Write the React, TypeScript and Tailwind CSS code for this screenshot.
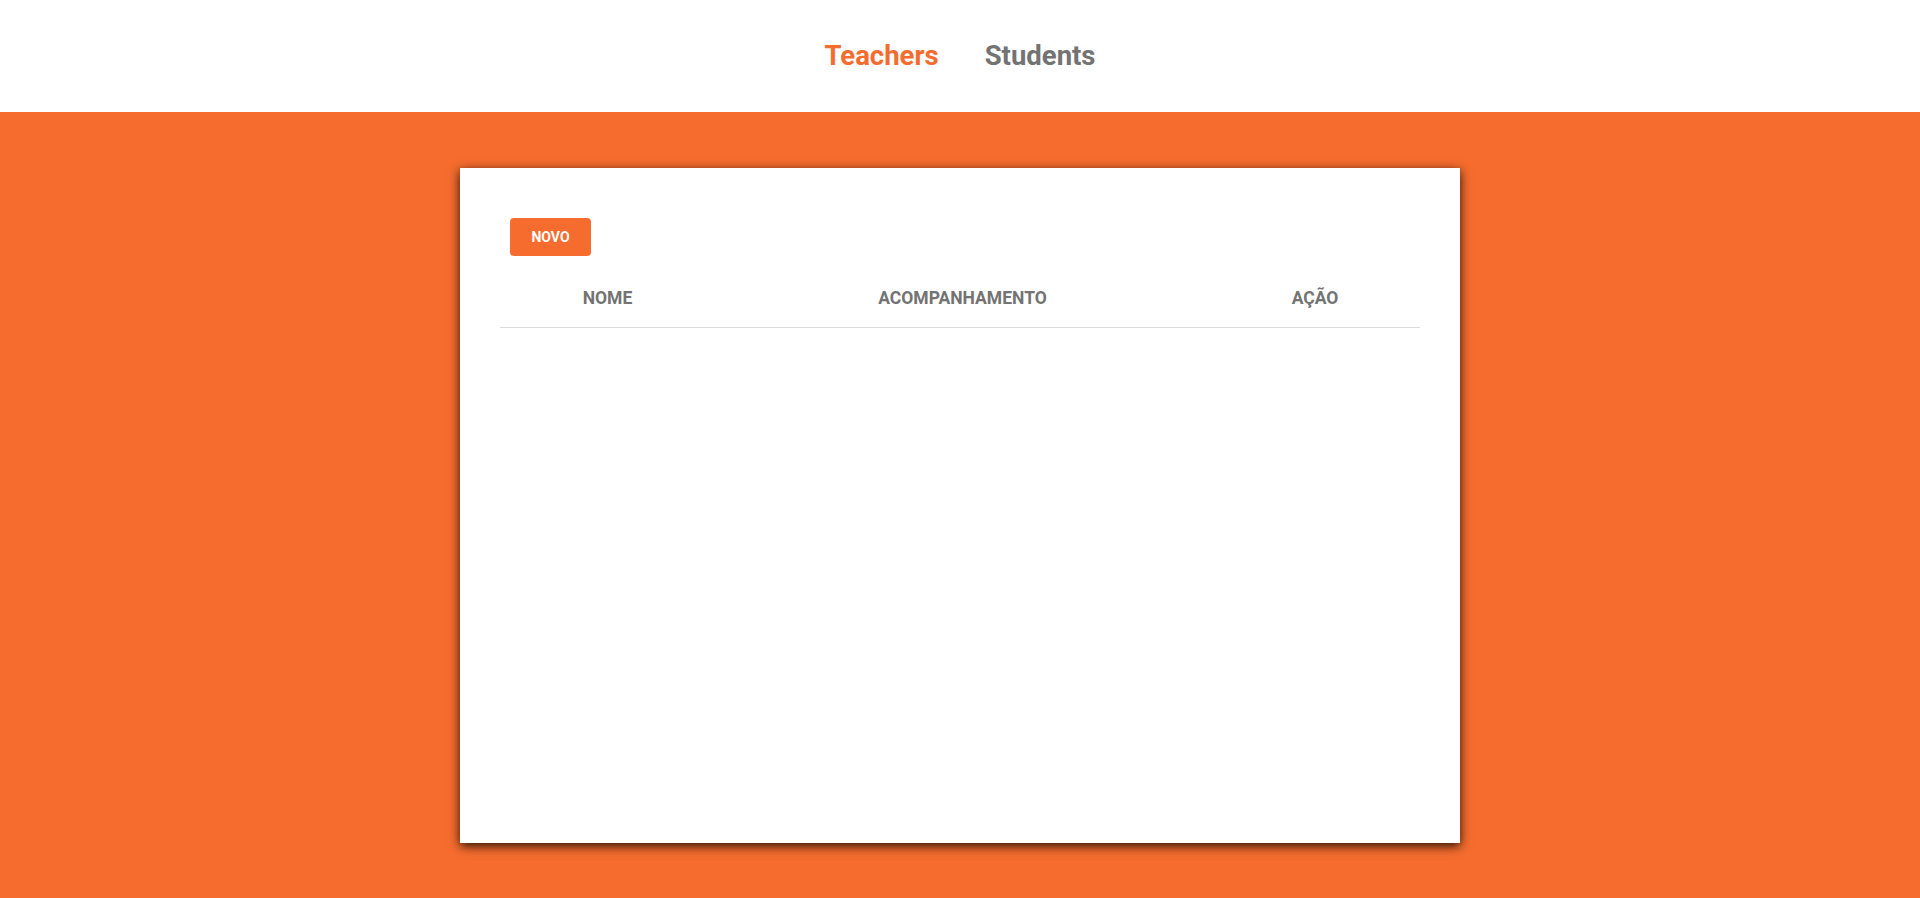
import React from 'react';

const columns = [
  { label: 'NOME', width: 'w-[215px]' },
  { label: 'ACOMPANHAMENTO', width: 'w-[495px]' },
  { label: 'AÇÃO', width: 'w-[210px]' },
];

export default function App() {
  return (
    <div className="min-h-[898px] flex flex-col bg-[#f56c2e] font-['Roboto',_'Liberation_Sans',_sans-serif]">
      {/* top nav */}
      <nav className="h-[112px] bg-white flex items-center justify-center gap-[46px]">
        <a className="text-[27.5px] font-bold text-[#f56c2e] cursor-pointer">Teachers</a>
        <a className="text-[27.5px] font-bold text-[#737373] cursor-pointer">Students</a>
      </nav>

      {/* content */}
      <main className="flex justify-center pt-[56px] pb-[55px]">
        <div className="w-[1000px] h-[675px] bg-white px-[40px] pt-[50px] shadow-[0_3px_10px_rgba(0,0,0,0.85)]">
          <button className="ml-[10px] w-[81px] h-[38px] rounded-[4px] bg-[#f56c2e] text-white text-[14px] font-bold">
            NOVO
          </button>
          <table className="mt-[14px] w-[920px] border-collapse">
            <thead>
              <tr className="border-b border-[#dcdcdc]">
                {columns.map((c) => (
                  <th
                    key={c.label}
                    className={`${c.width} h-[57px] text-center text-[17.5px] font-bold text-[#737373] align-middle pb-[1px]`}
                  >
                    {c.label}
                  </th>
                ))}
              </tr>
            </thead>
            <tbody></tbody>
          </table>
        </div>
      </main>
    </div>
  );
}
